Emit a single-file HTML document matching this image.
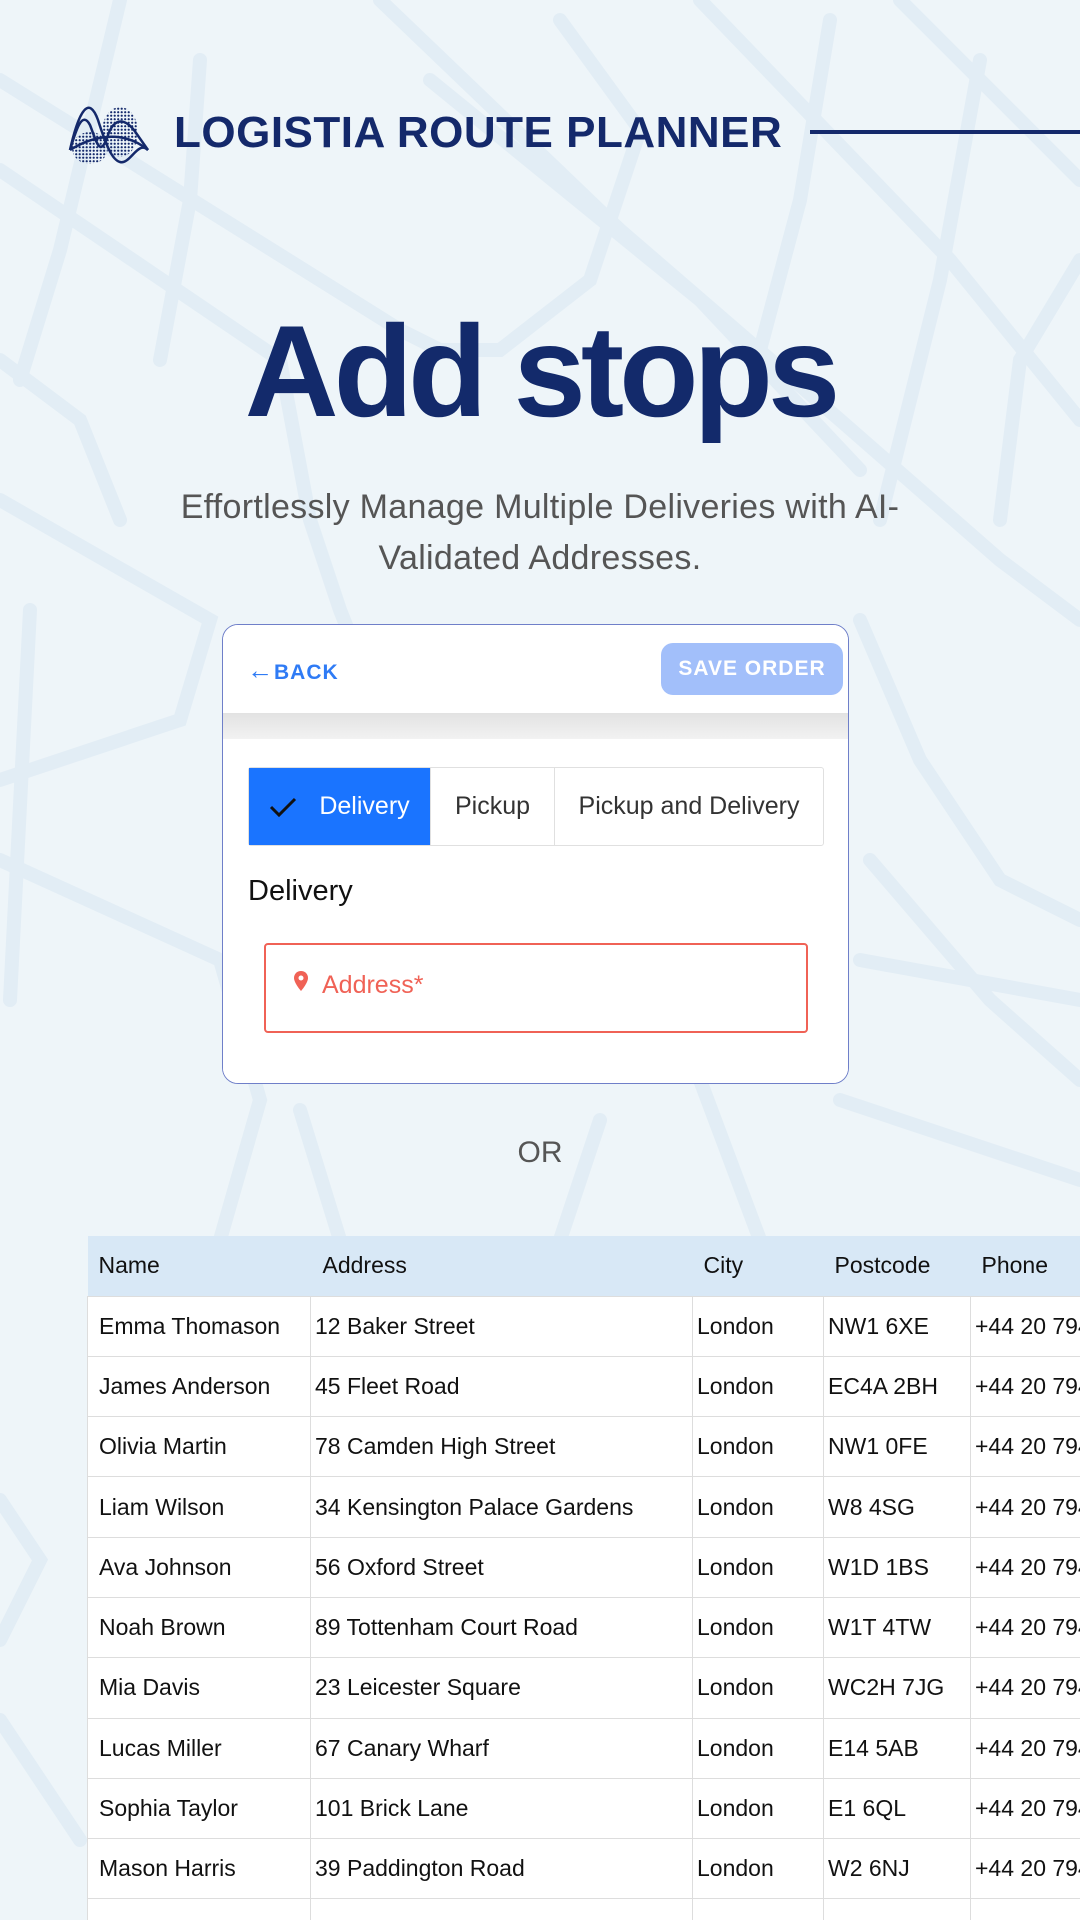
<!DOCTYPE html>
<html><head><meta charset="utf-8"><style>
*{margin:0;padding:0;box-sizing:border-box}
html,body{width:1080px;height:1920px;overflow:hidden}
body{background:#eef5f9;font-family:"Liberation Sans",sans-serif;position:relative}
.bg{position:absolute;left:0;top:0}
.abs{position:absolute}
.title{left:174px;top:108px;font-size:44px;font-weight:bold;color:#14296b;letter-spacing:0.5px;white-space:nowrap}
.line{left:810px;top:130px;width:270px;height:4px;background:#14296b}
.h1{left:0;width:1080px;top:296px;text-align:center;font-size:130px;font-weight:bold;color:#132a6b;letter-spacing:-5px}
.sub{left:100px;width:880px;top:482px;text-align:center;font-size:34px;line-height:51px;color:#555;letter-spacing:0.3px}
.card{left:222px;top:624px;width:627px;height:460px;background:#fff;border:1.5px solid #6f7fc9;border-radius:16px;overflow:hidden}
.band{position:absolute;left:0;top:88px;width:100%;height:26px;background:linear-gradient(#e2e2e2,#f2f2f2)}
.back{position:absolute;left:24px;top:30px;color:#2f7bf5;font-size:21px;font-weight:bold;letter-spacing:1px}
.save{position:absolute;left:438px;top:18px;width:182px;height:52px;border-radius:12px;background:#a2bffa;color:#fff;font-size:21px;font-weight:bold;text-align:center;line-height:52px;letter-spacing:1px}
.tabs{position:absolute;left:25px;top:142px;width:576px;height:79px;border:1.5px solid #e0e0e0;border-radius:3px;display:flex;font-size:25px;color:#333}
.tabs div{display:flex;align-items:center;justify-content:center;border-right:1.5px solid #e0e0e0;flex-shrink:0}
.dh{position:absolute;left:25px;top:250px;font-size:29px;color:#111}
.addr{position:absolute;left:41px;top:318px;width:544px;height:90px;border:2px solid #f06256;border-radius:4px;color:#f06256;font-size:25px}
.or{left:0;width:1080px;top:1136px;text-align:center;font-size:30px;color:#555}
.tw{position:absolute;left:87px;top:1236px;width:993px;height:684px;overflow:hidden}
table{border-collapse:collapse;font-size:23px;color:#111;table-layout:fixed;width:1140px}
th{background:#d8e8f6;font-weight:normal;text-align:left;height:60px;padding-left:11px}
td{background:#fff;height:60.3px;padding-left:4px;border:1.5px solid #ddd;white-space:nowrap;overflow:hidden}
td:first-child{padding-left:11px}
</style></head><body>
<svg class="bg" width="1080" height="1920" fill="none" stroke="#e2edf5" stroke-width="14" stroke-linecap="round">
<path d="M0 80 L400 330 L440 350 L500 350 L590 280 L640 130 L560 20"/>
<path d="M0 170 L280 360 L310 520 L340 610 L380 710"/>
<path d="M120 0 L60 250 L20 380"/>
<path d="M200 60 L190 200 L160 360"/>
<path d="M380 0 L620 230 L840 420 L1000 560 L1080 620"/>
<path d="M430 80 L700 300 L860 470"/>
<path d="M700 0 L950 260 L1080 420"/>
<path d="M900 0 L1080 180"/>
<path d="M830 20 L800 200 L760 350"/>
<path d="M980 60 L940 280 L880 520"/>
<path d="M1080 260 L1020 360 L1000 520"/>
<path d="M0 500 L210 620 L180 720 L0 780"/>
<path d="M30 610 L10 1000"/>
<path d="M0 860 L220 960 L260 1100 L220 1240"/>
<path d="M860 620 L920 760 L1000 880 L1080 920"/>
<path d="M870 860 L990 1000 L1080 1080"/>
<path d="M840 1100 L1080 1180"/>
<path d="M600 1120 L560 1240"/>
<path d="M300 1110 L340 1240"/>
<path d="M0 1500 L40 1560 L0 1640"/>
<path d="M0 1720 L80 1840"/>
<path d="M860 960 L1080 1000"/>
<path d="M700 1080 L760 1240"/>
<path d="M0 360 L80 420 L120 520"/>
</svg>
<svg class="abs" style="left:64px;top:100px" width="90" height="70" viewBox="0 0 90 70" fill="none" stroke="#14296b" stroke-width="2.5">
<defs><pattern id="d" width="3.5" height="3.5" patternUnits="userSpaceOnUse"><circle cx="1.7" cy="1.7" r="1.1" fill="#14296b" stroke="none"/></pattern></defs>
<ellipse cx="26" cy="48" rx="18" ry="16" fill="url(#d)" stroke="none"/>
<ellipse cx="56" cy="32" rx="18" ry="25" fill="url(#d)" stroke="none"/>
<path d="M6 50 C15 10,25 -5,34 20 C42 45,48 60,56 62 C66 65,74 40,84 50"/>
<path d="M6 50 C12 30,18 10,26 25 C32 40,36 60,44 35 C50 18,60 18,70 30 L84 50"/>
<path d="M6 50 C30 35,60 30,84 50"/>
</svg>
<div class="abs title">LOGISTIA ROUTE PLANNER</div>
<div class="abs line"></div>
<div class="abs h1">Add stops</div>
<div class="abs sub">Effortlessly Manage Multiple Deliveries with AI-<br>Validated Addresses.</div>
<div class="abs card">
<div class="band"></div>
<div style="position:absolute;left:0;top:0;width:100%;height:88px;background:#fff;border-radius:0 0 12px 12px"></div>
<div style="position:absolute;left:0;top:114px;width:100%;height:350px;background:#fff;border-radius:12px 12px 0 0"></div>
<div class="back"><span style="font-size:26px;font-weight:normal">&#8592;</span>BACK</div>
<div class="save">SAVE ORDER</div>
<div class="tabs">
<div style="width:182px;background:#1a74ff;color:#fff;gap:22px"><svg width="28" height="22" viewBox="0 0 28 22"><path d="M2 11 L10 19 L26 3" stroke="#111" stroke-width="3" fill="none"/></svg>Delivery</div>
<div style="width:124px">Pickup</div>
<div style="flex:1;border-right:none">Pickup and Delivery</div>
</div>
<div class="dh">Delivery</div>
<div class="addr"><svg style="position:absolute;left:28px;top:26px" width="14" height="20" viewBox="0 0 14 20"><path d="M7 0C3 0 0 3 0 7c0 5 7 13 7 13s7-8 7-13c0-4-3-7-7-7z" fill="#f06256"/><circle cx="7" cy="7" r="2.5" fill="#fff"/></svg><span style="position:absolute;left:56px;top:26px">Address*</span></div>
</div>
<div class="abs or">OR</div>
<div class="tw"><table>
<colgroup><col style="width:223px"><col style="width:382px"><col style="width:131px"><col style="width:147px"><col style="width:257px"></colgroup>
<tr><th>Name</th><th style="padding-left:12px">Address</th><th>City</th><th>Postcode</th><th>Phone</th></tr>
<tr><td>Emma Thomason</td><td>12 Baker Street</td><td>London</td><td>NW1 6XE</td><td>+44 20 7946 0001</td></tr>
<tr><td>James Anderson</td><td>45 Fleet Road</td><td>London</td><td>EC4A 2BH</td><td>+44 20 7946 0002</td></tr>
<tr><td>Olivia Martin</td><td>78 Camden High Street</td><td>London</td><td>NW1 0FE</td><td>+44 20 7946 0003</td></tr>
<tr><td>Liam Wilson</td><td>34 Kensington Palace Gardens</td><td>London</td><td>W8 4SG</td><td>+44 20 7946 0004</td></tr>
<tr><td>Ava Johnson</td><td>56 Oxford Street</td><td>London</td><td>W1D 1BS</td><td>+44 20 7946 0005</td></tr>
<tr><td>Noah Brown</td><td>89 Tottenham Court Road</td><td>London</td><td>W1T 4TW</td><td>+44 20 7946 0006</td></tr>
<tr><td>Mia Davis</td><td>23 Leicester Square</td><td>London</td><td>WC2H 7JG</td><td>+44 20 7946 0007</td></tr>
<tr><td>Lucas Miller</td><td>67 Canary Wharf</td><td>London</td><td>E14 5AB</td><td>+44 20 7946 0008</td></tr>
<tr><td>Sophia Taylor</td><td>101 Brick Lane</td><td>London</td><td>E1 6QL</td><td>+44 20 7946 0009</td></tr>
<tr><td>Mason Harris</td><td>39 Paddington Road</td><td>London</td><td>W2 6NJ</td><td>+44 20 7946 0010</td></tr>
<tr><td>Isabella Clark</td><td>58 Regent Street</td><td>London</td><td>W1B 4QR</td><td>+44 20 7946 0011</td></tr>
</table></div>
</body></html>
